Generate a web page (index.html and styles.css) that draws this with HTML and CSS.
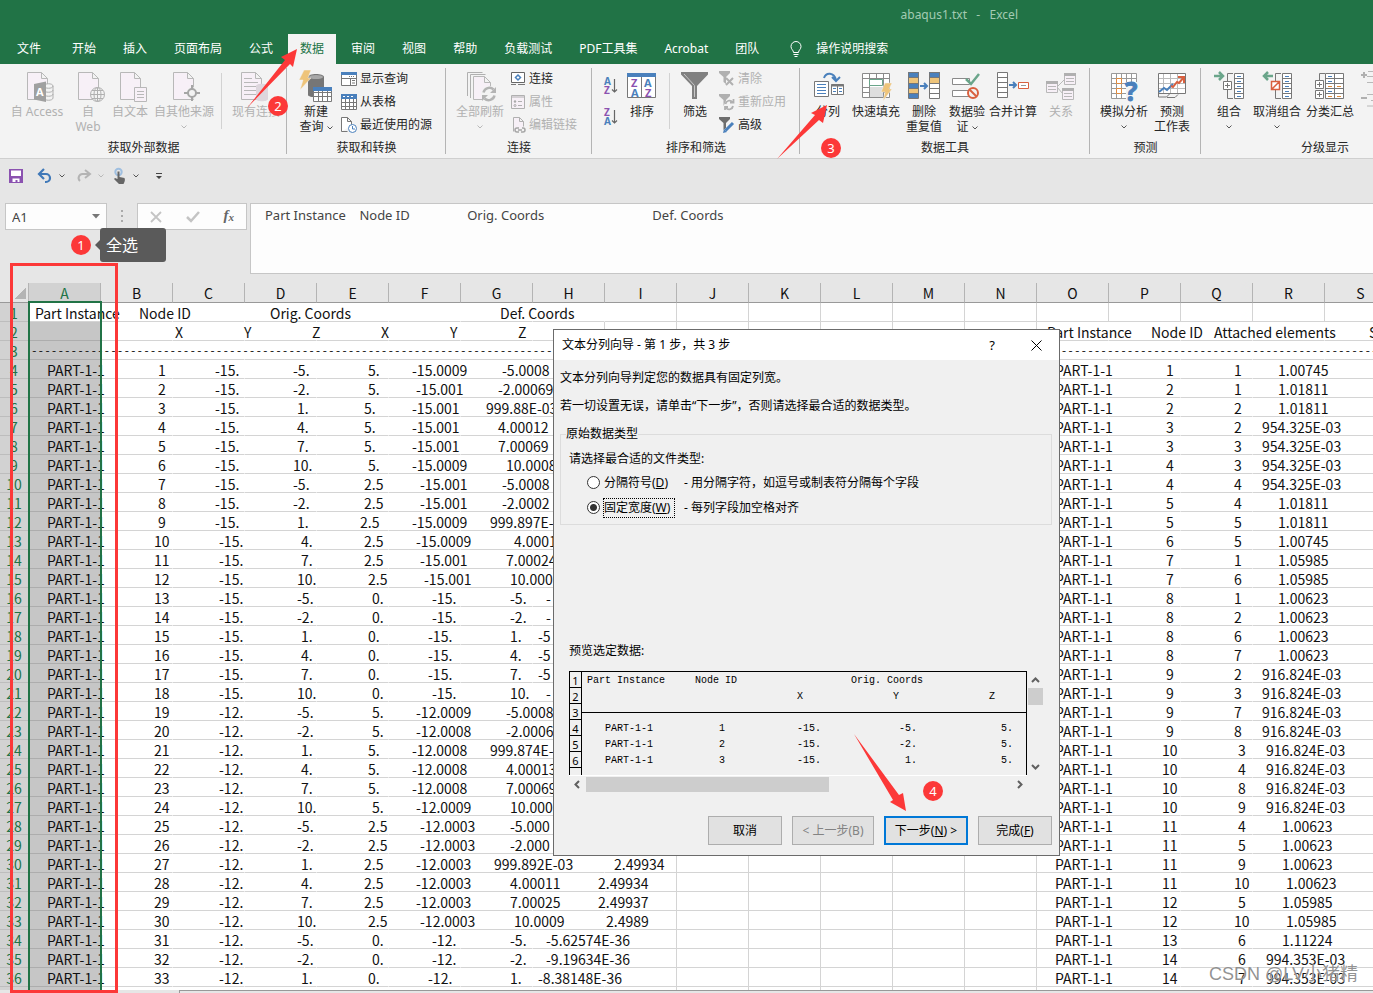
FILE: index.html
```html
<!DOCTYPE html>
<html lang="zh-CN">
<head>
<meta charset="utf-8">
<title>abaqus1.txt - Excel</title>
<link rel="stylesheet" href="styles.css">
</head>
<body>
<div class="app">
<header class="titlebar">
  <div class="doc-title">abaqus1.txt&nbsp;&nbsp; - &nbsp;&nbsp;Excel</div>
  <nav class="tabs">
    <button class="tab tab-file">文件</button>
    <button class="tab">开始</button>
    <button class="tab">插入</button>
    <button class="tab">页面布局</button>
    <button class="tab">公式</button>
    <button class="tab tab-active">数据</button>
    <button class="tab">审阅</button>
    <button class="tab">视图</button>
    <button class="tab">帮助</button>
    <button class="tab">负载测试</button>
    <button class="tab">PDF工具集</button>
    <button class="tab">Acrobat</button>
    <button class="tab">团队</button>
    <button class="tab tell-me"><svg width="12" height="17" viewBox="0 0 12 17" fill="none" stroke="#fff"><path d="M3.500 11.500C3.500 9 1 8.500 1 5.500A5 5 0 0 1 11 5.500C11 8.500 8.500 9 8.500 11.500ZM3.500 13.500h5M4.500 15.500h3"/></svg>操作说明搜索</button>
  </nav>
</header>

<section class="ribbon">
  <div class="group g-external">
    <div class="tools">
      <button class="big" disabled><svg class="icon" viewBox="21 70 32 34"><path class="pg" d="M27.500 72.500h14l6 6V99.500H27.500ZM41.500 72.500v6h6"/><path class="db" d="M44 85v13c0 3 9 3 9 0V86c0-3-9-3-9 0 0 3 9 3 9 0M44 90c0 3 9 3 9 0M44 94c0 3 9 3 9 0"/><path fill="#a0a0a0" d="M34 84 46 81.500V102L34 99.500Z"/><text x="36" y="96" font-size="11" font-weight="700" fill="#fff">A</text></svg><span>自 Access</span></button>
      <button class="big" disabled><svg class="icon" viewBox="72 70 32 34"><path class="pg" d="M78.500 72.500h14l6 6V99.500H78.500ZM92.500 72.500v6h6"/><g fill="#f3f3f3" stroke="#b0b0b0"><circle cx="97.500" cy="94.500" r="7"/><ellipse cx="97.500" cy="94.500" rx="3.500" ry="7"/><path fill="none" d="M90.500 94.500h14M97.500 87.500v14M92 90.500h11M92 98.500h11"/></g></svg><span>自<br>Web</span></button>
      <button class="big" disabled><svg class="icon" viewBox="114 70 32 34"><path class="pg" d="M120.500 72.500h14l6 6V99.500H120.500ZM134.500 72.500v6h6"/><path class="pg" d="M134.500 87.500h12v14h-12ZM137 91.500h7M137 94.500h7M137 97.500h7"/></svg><span>自文本</span></button>
      <button class="big" disabled><svg class="icon" viewBox="168 70 32 34"><path class="pg" d="M173.500 72.500h14l6 6V99.500H173.500ZM187.500 72.500v6h6"/><circle cx="192" cy="93" r="6" fill="#f3f3f3"/><g fill="none" stroke="#a6a6a6" stroke-width="2"><circle cx="192" cy="93" r="4"/><path d="M192 85v4M192 97v4M184 93h4M196 93h4"/></g></svg><span>自其他来源</span><svg class="chev" viewBox="0 0 6 4"><path d="M.5.5 3 3 5.500.5"/></svg></button>
      <i class="rule"></i>
      <button class="big" disabled><svg class="icon" viewBox="240 70 32 34"><path class="pg" d="M241.500 72.500h14l6 6V99.500H241.500ZM255.500 72.500v6h6M244 78.500h8M244 82.500h14M244 86.500h14M244 90.500h14M244 94.500h14"/><path fill="#ddd6dd" d="M256 86c0-3 12-3 12 0v13c0 3-12 3-12 0Z"/></svg><span>现有连接</span></button>
    </div>
    <div class="group-name">获取外部数据</div>
  </div>

  <div class="group g-transform">
    <div class="tools">
      <button class="big"><svg class="icon" viewBox="300 70 32 34"><path fill="#767676" d="M308 77c0-4 16-4 16 0v18c0 3-16 3-16 0Z"/><ellipse cx="316" cy="77" rx="7" ry="2" fill="#a8a8a8"/><path fill="#eec47a" stroke="#f3f3f3" stroke-width=".5" d="M304 70h7l-3 8h3l-11 12 3-10h-4Z"/><path fill="#fff" stroke="#7a7a7a" d="M313.500 87.500h18v14h-18ZM313.500 92.500h18M313.500 96.500h18M318.500 91v10M322.500 91v10M327.500 91v10"/><path fill="#4a80bc" d="M313 87h19v4h-19z"/></svg><span>新建<br>查询 <svg class="chev-in" viewBox="0 0 6 4"><path d="M.5.5 3 3 5.500.5"/></svg></span></button>
      <div class="stack">
        <button class="small"><svg viewBox="0 0 16 16"><path fill="#fff" stroke="#777" d="M.5 1.500h15v13H.5ZM.5 7.500h15M9.500 8v6M11 9.500h3M11 12h3"/><path fill="#4a80bc" d="M0 1h16v3H0z"/><path stroke="#777" stroke-dasharray="1 1" d="M8 5.500h6"/></svg>显示查询</button>
        <button class="small"><svg viewBox="0 0 16 16"><path fill="#fff" stroke="#777" d="M.5.5h15v15H.5ZM.5 8.500h15M.5 12.500h15M4.500 5v10M8.500 5v10M12.500 5v10"/><path fill="#4a80bc" d="M0 0h16v5H0z"/><path stroke="#fff" stroke-dasharray="2 2" d="M2 2.500h12"/></svg>从表格</button>
        <button class="small"><svg viewBox="0 0 16 16"><path fill="#fff" stroke="#777" d="M.5 14.500V.5h6l4 4v4M6.500.5v4h4M.5 14.500h6"/><circle cx="11.500" cy="11.500" r="4" fill="#fff" stroke="#4a80bc"/><path fill="none" stroke="#4a80bc" d="M11.500 9v3h2.500"/></svg>最近使用的源</button>
      </div>
    </div>
    <div class="group-name">获取和转换</div>
  </div>

  <div class="group g-connect">
    <div class="tools">
      <button class="big" disabled><svg class="icon" viewBox="464 70 32 34"><path fill="none" stroke="#b0b0b0" d="M467.500 96V72.500h15M470.500 98V74.500h15"/><path class="pg" d="M473.500 76.500h11l6 6V99.500h-17ZM484.500 76.500v6h6"/><circle cx="489" cy="94" r="8" fill="#f3f3f3"/><g fill="none" stroke="#b4b4b4" stroke-width="2.500"><path d="M483.500 92.500a6 6 0 0 1 10-3M494.500 95.500a6 6 0 0 1-10 3"/></g><path fill="#b4b4b4" d="M496 87v6h-6ZM482 101v-6h6Z"/></svg><span>全部刷新</span><svg class="chev" viewBox="0 0 6 4"><path d="M.5.5 3 3 5.500.5"/></svg></button>
      <div class="stack">
        <button class="small"><svg viewBox="0 0 16 16"><path fill="#fff" stroke="#666" d="M1.500 1.500h13v10h-13Z"/><path stroke="#777" d="M1 13.500h5M8 13.500h7"/><path fill="none" stroke="#4a80bc" stroke-width="1.500" d="M8 4 10.500 6.500 8 9 5.500 6.500Z"/></svg>连接</button>
        <button class="small" disabled><svg viewBox="0 0 16 16"><path fill="#f7f0f7" stroke="#b0b0b0" d="M1.500 1.500h13v13h-13ZM1.500 3h13M8 7.500h4M8 11.500h4"/><circle cx="5" cy="7.500" r="1.200" fill="#aaa"/><circle cx="5" cy="11.500" r="1" fill="none" stroke="#aaa"/></svg>属性</button>
        <button class="small" disabled><svg viewBox="0 0 16 16"><path fill="#f7f0f7" stroke="#b0b0b0" d="M3.500 14.500V.5h6l4 4v5M9.500.5v4h4"/><path fill="none" stroke="#a6a6a6" stroke-width="1.500" d="M9 11H7a2 2 0 0 0 0 4h2M12 11h1a2 2 0 0 1 0 4h-2M8 13h4"/></svg>编辑链接</button>
      </div>
    </div>
    <div class="group-name">连接</div>
  </div>

  <div class="group g-sort">
    <div class="tools">
      <div class="az">
        <button aria-label="升序"><svg width="14" height="18" viewBox="0 0 14 18"><text x="0" y="8" font-size="10" font-weight="700" fill="#4a80bc">A</text><text x="0" y="17" font-size="10" font-weight="700" fill="#8b52b0">Z</text><path fill="none" stroke="#666" stroke-width="1.200" d="M10.500 2v13M8 12.500l2.500 2.500 2.500-2.500"/></svg></button>
        <button aria-label="降序"><svg width="14" height="18" viewBox="0 0 14 18"><text x="0" y="8" font-size="10" font-weight="700" fill="#8b52b0">Z</text><text x="0" y="17" font-size="10" font-weight="700" fill="#4a80bc">A</text><path fill="none" stroke="#666" stroke-width="1.200" d="M10.500 2v13M8 12.500l2.500 2.500 2.500-2.500"/></svg></button>
      </div>
      <button class="big"><svg class="icon" viewBox="627 70 32 34"><path fill="#fff" stroke="#777" d="M628.500 73.500h28v24h-28ZM642.500 77v20"/><path fill="#4a80bc" d="M628 73h29v4h-29z"/><g font-size="11" font-weight="700"><text x="632" y="87" fill="#8b52b0">Z</text><text x="632" y="97" fill="#4a80bc">A</text><text x="645" y="87" fill="#4a80bc">A</text><text x="646" y="97" fill="#8b52b0">Z</text></g></svg><span>排序</span></button>
      <i class="rule"></i>
      <button class="big"><svg class="icon" viewBox="678 70 32 34"><path fill="#808080" d="M680 72h27v2.500L696 86v13h-5V86L680 74.500Z"/><path fill="none" stroke="#c8c8c8" d="M683 74l10.500 11.500V97"/></svg><span>筛选</span></button>
      <div class="stack">
        <button class="small" disabled><svg viewBox="0 0 16 16"><path fill="#b0b0b0" d="M0 0h11v2L7 6v7L4.500 11V6L0 2Z"/><path stroke="#b0b0b0" stroke-width="2" d="M7 7l7 7M14 7l-7 7"/></svg>清除</button>
        <button class="small" disabled><svg viewBox="0 0 16 16"><path fill="#b0b0b0" d="M0 0h11v2L7 6v1l-2.500 5V6L0 2Z"/><path fill="none" stroke="#b0b0b0" stroke-width="1.800" d="M6.500 10a4 4 0 0 1 7-2M14 12a4 4 0 0 1-7 2M14.500 5v3.500H11M6 16v-3h3"/></svg>重新应用</button>
        <button class="small"><svg viewBox="0 0 16 16"><path fill="#6e6e6e" d="M0 0h11v2L7 6v5L4.500 13V6L0 2Z"/><path stroke="#4a80bc" stroke-width="3" d="M6.500 13.500 14 6"/><path fill="#4a80bc" d="M4 16l1-4 3 3Z"/></svg>高级</button>
      </div>
    </div>
    <div class="group-name">排序和筛选</div>
  </div>

  <div class="group g-tools">
    <div class="tools">
      <button class="big"><svg class="icon" viewBox="812 70 32 34"><path fill="#fff" stroke="#777" d="M814.500 81.500h14v15h-14ZM831.500 84.500h12v10h-12ZM837.500 85v9"/><path stroke="#777" stroke-width="2" d="M831 85.500h13"/><path stroke="#4a80bc" d="M817 84.500h9M817 87.500h9M817 90.500h9M817 93.500h9M833 88.500h3M839 88.500h3M833 91.500h3M839 91.500h3"/><path fill="none" stroke="#4a80bc" stroke-width="2" d="M824 78c2-6 10-6 12 2M832 77l4 4 4-4"/></svg><span>分列</span></button>
      <button class="big"><svg class="icon" viewBox="860 70 32 34"><path fill="#fff" stroke="#8a8a8a" d="M862.500 73.500h27v24h-27ZM862.500 78.500h27M862.500 87.500h27M862.500 92.500h27M869.500 74v23M883.500 74v23M876.500 74v4"/><path fill="#dedede" d="M870 87h13v10h-13z"/><path fill="#fff" stroke="#6aa58a" d="M869.500 79.500h13v6h-13Z"/><path fill="#eec47a" stroke="#f3f3f3" stroke-width=".5" d="M885 83h7l-3 6h3l-9 12 2-9h-4Z"/></svg><span>快速填充</span></button>
      <button class="big"><svg class="icon" viewBox="908 70 32 34"><path fill="#4a80bc" d="M908 72h11v26h-11zM929 72h11v5h-11z"/><path fill="#eec47a" d="M908 78h11v5h-11zM908 88h11v5h-11zM929 78h11v5h-11z"/><path fill="#fff" d="M929 83h11v15h-11z"/><path fill="none" stroke="#777" d="M908.500 72.500h10v26h-10ZM908.500 77.500h10M908.500 83.500h10M908.500 88.500h10M908.500 93.500h10M929.500 72.500h10v26h-10ZM929.500 77.500h10M929.500 83.500h10M929.500 88.500h10M929.500 93.500h10"/><path fill="none" stroke="#4a80bc" stroke-width="2" d="M920 86h7M924 83l3 3-3 3"/></svg><span>删除<br>重复值</span></button>
      <button class="big"><svg class="icon" viewBox="951 70 32 34"><path fill="#fff" stroke="#8a8a8a" d="M952.500 78.500h17v6h-17ZM952.500 90.500h17v6h-17Z"/><path fill="none" stroke="#6aa58a" stroke-width="2.500" d="M966 79l5 5 8-10"/><circle cx="973" cy="93" r="5" fill="#f3f3f3" stroke="#d9603f" stroke-width="2"/><path stroke="#d9603f" stroke-width="2" d="M969.500 89.500l7 7"/></svg><span>数据验<br>证 <svg class="chev-in" viewBox="0 0 6 4"><path d="M.5.5 3 3 5.500.5"/></svg></span></button>
      <button class="big"><svg class="icon" viewBox="997 70 32 34"><path fill="#fff" stroke="#777" d="M997.500 72.500h10v25h-10ZM997.500 77.500h10M997.500 82.500h10M997.500 87.500h10M997.500 92.500h10"/><path fill="none" stroke="#4a80bc" stroke-width="2" d="M1009 85h7M1013 82l3 3-3 3"/><path fill="#fff" stroke="#d9603f" d="M1018.500 82.500h10v6h-10Z"/><path stroke="#999" d="M1021 85.500h5"/></svg><span>合并计算</span></button>
      <button class="big" disabled><svg class="icon" viewBox="1045 70 32 34"><path fill="none" stroke="#b8b8b8" d="M1057 87l7-7M1057 87l6 7"/><path class="pg" d="M1046.500 81.500h11v11h-11ZM1064.500 73.500h11v11h-11ZM1062.500 88.500h11v11h-11ZM1048 86.500h8M1048 89.500h8M1066 78.500h8M1066 81.500h8M1064 93.500h8M1064 96.500h8"/><path fill="#b0b0b0" d="M1046 81h12v3h-12zM1064 73h12v3h-12zM1062 88h12v3h-12z"/></svg><span>关系</span></button>
    </div>
    <div class="group-name">数据工具</div>
  </div>

  <div class="group g-forecast">
    <div class="tools">
      <button class="big"><svg class="icon" viewBox="1108 70 32 34"><path fill="#fff" stroke="#999" d="M1111.500 73.500h25v25h-25ZM1111.500 78.500h25M1111.500 83.500h25M1111.500 88.500h25M1111.500 93.500h25M1116.500 74v24M1121.500 74v24M1126.500 74v24M1131.500 74v24"/><path fill="#fff" stroke="#e08a3c" d="M1116.500 78.500h5v5h-5ZM1116.500 88.500h5v5h-5Z"/><path fill="#f3f3f3" d="M1126 82h12v20h-12z"/><text x="1125" y="101" font-size="26" font-weight="700" fill="#4a80bc" stroke="#4a80bc" stroke-width="1">?</text></svg><span>模拟分析</span><svg class="chev" viewBox="0 0 6 4"><path d="M.5.5 3 3 5.500.5"/></svg></button>
      <button class="big"><svg class="icon" viewBox="1156 70 32 34"><path fill="#fff" stroke="#777" d="M1158.500 73.500h27v20h-27Z"/><path fill="none" stroke="#bbb" d="M1159 78.500h26M1159 83.500h26M1159 88.500h26M1163.500 74v19M1170.500 74v19M1177.500 74v19"/><path fill="none" stroke="#777" d="M1158.500 93v4h8l3-3M1167 97.500h8l3-3"/><path fill="none" stroke="#4a80bc" stroke-width="2" d="M1159 92l5-4 3 2 6-6"/><path fill="none" stroke="#d9603f" stroke-width="2" d="M1171 86l2 1 4-5 2 1 5-6M1178 77h6v6"/></svg><span>预测<br>工作表</span></button>
    </div>
    <div class="group-name">预测</div>
  </div>

  <div class="group g-outline">
    <div class="tools">
      <button class="big"><svg class="icon" viewBox="1213 70 32 34"><path fill="none" stroke="#6aa58a" stroke-width="2.500" d="M1214 76h9M1219 72l4 4-4 4"/><path fill="#fff" stroke="#777" d="M1223.500 81.500h8v8h-8ZM1234.500 73.500h9v25h-9ZM1234.500 78.500h9M1234.500 83.500h9M1234.500 88.500h9M1234.500 93.500h9M1225 85.500h5M1227.500 83v5"/><path fill="none" stroke="#777" d="M1233 73.500h-5.500v8M1227.500 90v8.500h5.500"/><path stroke="#4a80bc" d="M1237 76.500h4M1237 81.500h4M1237 86.500h4M1237 91.500h4M1237 96.500h4"/></svg><span>组合</span><svg class="chev" viewBox="0 0 6 4"><path d="M.5.5 3 3 5.500.5"/></svg></button>
      <button class="big"><svg class="icon" viewBox="1261 70 32 34"><path fill="none" stroke="#6aa58a" stroke-width="2.500" d="M1273 76h-9M1268 72l-4 4 4 4"/><path fill="#fff" stroke="#777" d="M1282.500 73.500h9v25h-9ZM1282.500 78.500h9M1282.500 83.500h9M1282.500 88.500h9M1282.500 93.500h9"/><path fill="none" stroke="#777" d="M1281 73.500h-5.500v8M1275.500 90v8.500h5.500"/><path fill="#fff" stroke="#d9603f" stroke-width="1.500" d="M1271.500 81.500h8v8h-8ZM1272 89l7-7"/><path stroke="#4a80bc" d="M1285 76.500h4M1285 81.500h4M1285 86.500h4M1285 91.500h4M1285 96.500h4"/></svg><span>取消组合</span><svg class="chev" viewBox="0 0 6 4"><path d="M.5.5 3 3 5.500.5"/></svg></button>
      <button class="big"><svg class="icon" viewBox="1314 70 32 34"><path fill="none" stroke="#777" d="M1325 73.500h-5.500v7"/><path fill="#fff" stroke="#777" d="M1315.500 80.500h8v8h-8ZM1315.500 90.500h8v8h-8ZM1317 84.500h5M1319.500 82v5M1317 94.500h5M1319.500 92v5M1325.500 73.500h18v25h-18ZM1325.500 78.500h18M1325.500 83.500h18M1325.500 88.500h18M1325.500 93.500h18M1334.500 74v24"/><path stroke="#4a80bc" d="M1328 76.500h4M1328 81.500h4M1328 91.500h4"/><path stroke="#e08a3c" d="M1328 86.500h4M1337 86.500h4M1328 96.500h4M1337 96.500h4"/></svg><span>分类汇总</span></button>
      <button class="big" disabled aria-label="显示明细数据"><svg class="icon" viewBox="1360 70 32 34"><path fill="none" stroke="#b0b0b0" stroke-width="2" d="M1361 75h6M1364 72v6M1361 98h6"/><path class="pg" d="M1377 71.500h-9M1367 76.500h10M1377 82.500h-10M1377 94.500h-10M1371 100.500h10M1377 106h-10"/></svg></button>
    </div>
    <div class="group-name">分级显示</div>
  </div>
</section>

<section class="qat">
  <button aria-label="保存"><svg width="14" height="14" viewBox="0 0 14 14"><path fill="#8b52b0" d="M0 0h14v14H0z"/><path fill="#fff" d="M2 1.500h10V7H2zM3.500 9.500h7V13h-2v-2h-2v2h-3z"/></svg></button>
  <button aria-label="撤消"><svg width="16" height="14" viewBox="0 0 16 14" fill="none" stroke="#3f78b8" stroke-width="2.200"><path d="M7 0 2 5l5 5M2 5h7a4 4 0 0 1 0 8H8"/></svg></button>
  <button aria-label="撤消选项"><svg class="chev-q" viewBox="0 0 6 4"><path d="M.5.5 3 3 5.500.5"/></svg></button>
  <button class="q-redo" aria-label="恢复" disabled><svg width="16" height="14" viewBox="0 0 16 14" fill="none" stroke="#b4b4b4" stroke-width="2"><path d="M9 1l5 4-5 4M14 5H7a4 4 0 0 0-3 7"/></svg></button>
  <button aria-label="恢复选项" disabled><svg class="chev-q" viewBox="0 0 6 4"><path d="M.5.5 3 3 5.500.5"/></svg></button>
  <button class="q-touch" aria-label="触摸模式"><svg width="14" height="16" viewBox="0 0 14 16"><circle cx="5.500" cy="4" r="3.200" fill="none" stroke="#9fbfe0" stroke-width="2"/><path fill="#666" d="M4.500 3.500h2V9l5 1c1 2 0 4-1 6H6L1 11l1-1 2.500 1z"/></svg></button>
  <button aria-label="触摸选项"><svg class="chev-q" viewBox="0 0 6 4"><path d="M.5.5 3 3 5.500.5"/></svg></button>
  <button class="q-more" aria-label="自定义快速访问工具栏"><svg width="6" height="6" viewBox="0 0 6 6"><path fill="#444" d="M0 0h6v1H0zM0 3h6L3 6z"/></svg></button>
</section>

<section class="formula-bar">
  <div class="name-box"><input aria-label="名称框" value="A1"><svg width="8" height="5" viewBox="0 0 8 5"><path fill="#777" d="M0 0h8L4 4.500z"/></svg></div>
  <svg class="grip" width="2" height="12" viewBox="0 0 2 12"><path fill="#aaa" d="M0 0h2v2H0zM0 5h2v2H0zM0 10h2v2H0z"/></svg>
  <div class="fx">
    <button aria-label="取消"><svg width="12" height="12" viewBox="0 0 12 12"><path stroke="#c4c4c4" stroke-width="1.800" d="M1 1l10 10M11 1 1 11"/></svg></button>
    <button aria-label="输入"><svg width="14" height="12" viewBox="0 0 14 12"><path fill="none" stroke="#c4c4c4" stroke-width="2.500" d="M1 6l4 4 8-9"/></svg></button>
    <button class="fx-btn" aria-label="插入函数">f<sub>x</sub></button>
  </div>
  <textarea class="formula" aria-label="编辑栏" spellcheck="false">Part Instance    Node ID                 Orig. Coords                                Def. Coords</textarea>
</section>

<main class="sheet">
  <table class="grid">
    <colgroup id="cols"></colgroup>
    <thead id="head"></thead>
    <tbody id="rows"></tbody>
  </table>
  <div class="selection"></div>

  <form class="dialog" aria-labelledby="dlg-title" onsubmit="return false">
    <div class="dlg-title"><span id="dlg-title">文本分列向导 - 第 1 步，共 3 步</span>
      <button type="button" class="dlg-help" aria-label="帮助">?</button>
      <button type="button" aria-label="关闭"><svg width="11" height="11" viewBox="0 0 11 11"><path stroke="#000" d="M.5.5l10 10M10.500.5l-10 10"/></svg></button>
    </div>
    <p class="dlg-p">文本分列向导判定您的数据具有固定列宽。</p>
    <p class="dlg-p">若一切设置无误，请单击“下一步”，否则请选择最合适的数据类型。</p>
    <fieldset class="types">
      <legend>原始数据类型</legend>
      <p>请选择最合适的文件类型:</p>
      <div class="choice"><input type="radio" name="t" id="t1"><label for="t1">分隔符号(<u>D</u>)</label><span>- 用分隔字符，如逗号或制表符分隔每个字段</span></div>
      <div class="choice"><input type="radio" name="t" id="t2" checked><label for="t2" class="focus">固定宽度(<u>W</u>)</label><span>- 每列字段加空格对齐</span></div>
    </fieldset>
    <div class="preview-name">预览选定数据:</div>
    <div class="preview">
      <div class="preview-box">
        <table>
          <tr><th>1</th><td>Part Instance     Node ID                   Orig. Coords</td></tr>
          <tr><th>2</th><td>                                   X               Y               Z</td></tr>
          <tr class="dash-row"><th>3</th><td></td></tr>
          <tr><th>4</th><td>   PART-1-1           1            -15.             -5.              5.</td></tr>
          <tr><th>5</th><td>   PART-1-1           2            -15.             -2.              5.</td></tr>
          <tr><th>6</th><td>   PART-1-1           3            -15.              1.              5.</td></tr>
          <tr><th></th><td></td></tr>
        </table>
      </div>
      <div class="vbar"><svg width="9" height="6" viewBox="0 0 9 6"><path d="M1 5l3.500-3.500L8 5"/></svg><i></i><svg width="9" height="6" viewBox="0 0 9 6"><path d="M1 1l3.500 3.500L8 1"/></svg></div>
      <div class="hbar"><svg width="6" height="9" viewBox="0 0 6 9"><path d="M5 1 1.500 4.500 5 8"/></svg><i></i><svg width="6" height="9" viewBox="0 0 6 9"><path d="M1 1l3.500 3.500L1 8"/></svg></div>
    </div>
    <div class="actions">
      <button type="button">取消</button>
      <button type="button" class="mid" disabled>&lt; 上一步(B)</button>
      <button type="button" class="mid primary">下一步(<u>N</u>) &gt;</button>
      <button type="button">完成(<u>F</u>)</button>
    </div>
  </form>
</main>
<footer class="bottom"><div></div></footer>

<div class="tip">全选</div>
<div class="frame"></div>
<svg class="arrow arrow2" viewBox="247 49 50 60"><path d="M247 108 285 60 281 57 297 49 293 67 290 64Z"/></svg>
<svg class="arrow arrow3" viewBox="777 105 50 54"><path d="M777 159 815 115 811 113 827 105 823 123 819 120Z"/></svg>
<svg class="arrow arrow4" viewBox="854 734 52 78"><path d="M854 734 893 800 890 802 906 811 903 793 899 795Z"/></svg>
<b class="badge badge1">1</b>
<b class="badge badge2">2</b>
<b class="badge badge3">3</b>
<b class="badge badge4">4</b>
<div class="watermark">CSDN @LV小猪精</div>
</div>
<script src="grid.js"></script>
</body>
</html>
```
FILE: styles.css
```css
* { box-sizing: border-box; }
html, body { height: 100%; margin: 0; }
body {
  font: 12px/15px "Noto Sans", "Noto Sans CJK SC", sans-serif;
  color: #262626;
  overflow: hidden;
}
button {
  font: inherit; color: inherit; background: none; border: 0; padding: 0; margin: 0;
  white-space: nowrap;
}
p { margin: 0; }
svg { overflow: visible; display: block; flex: none; }
svg text { font-family: "Open Sans", sans-serif; }

.app {
  position: relative; height: 100vh; overflow: hidden;
  display: flex; flex-direction: column; background: #e6e6e6;
}

/* title and tabs */
.titlebar { background: #217346; color: #fff; flex: none; }
.doc-title { height: 34px; line-height: 30px; padding-right: 355px; text-align: right; color: #a3cbb3; }
.tabs { display: flex; gap: 3px; height: 30px; padding-left: 5px; }
.tab { padding: 0 12px; line-height: 28px; }
.tab-file { margin-right: 4px; }
.tab-active { background: #f3f3f3; color: #217346; }
.tell-me { display: flex; align-items: center; gap: 14px; padding-left: 16px; }

/* ribbon */
.ribbon {
  display: flex; flex: none; background: #f3f3f3; overflow: hidden;
  border-bottom: 1px solid #cfcfcf;
}
.group {
  flex: none; position: relative; padding-top: 3px; height: 94px;
  background: linear-gradient(#b4b4b4, #b4b4b4) right 4px / 1px 86px no-repeat;
}
.group:last-child { background: none; }
.tools { display: grid; height: 73px; align-items: start; }
.group-name { text-align: center; line-height: 16px; }
.g-external { width: 287px; }
.g-external .tools { grid-template-columns: 60px 42px 42px 66px 8px 54px; padding-left: 7px; }
.g-transform { width: 159px; }
.g-transform .tools { grid-template-columns: 50px 1fr; padding-left: 4px; }
.g-connect { width: 146px; }
.g-connect .tools { grid-template-columns: 50px 1fr; padding-left: 9px; column-gap: 5px; }
.g-sort { width: 208px; }
.g-sort .tools { grid-template-columns: 15px 46px 8px 44px 1fr; padding-left: 12px; }
.g-sort .stack { padding-left: 2px; }
.g-tools { width: 290px; }
.g-tools .tools { grid-template-columns: 48px 48px 48px 38px 54px 42px; padding-left: 4px; }
.g-forecast { width: 111px; }
.g-forecast .tools { grid-template-columns: 52px 44px; padding-left: 8px; }
.g-outline { width: 248px; }
.g-outline .tools { grid-template-columns: 48px 48px 58px 34px; padding-left: 4px; }
.big { display: flex; flex-direction: column; align-items: center; padding-top: 3px; line-height: 15px; }
.g-external .big:last-child { overflow: visible; margin-left: 4px; margin-right: -4px; }
.icon { width: 32px; height: 34px; }
.big:disabled, .small:disabled { color: #b1b1b1; }
.chev { width: 6px; height: 4px; margin-top: 6px; }
.chev-in { width: 6px; height: 4px; display: inline-block; vertical-align: middle; }
.chev-q { width: 6px; height: 4px; }
.chev path, .chev-in path, .chev-q path { fill: none; stroke: #555; }
:disabled .chev path, :disabled .chev-q path { stroke: #b8b8b8; }
.pg { fill: #f7f0f7; stroke: #b8b8b8; }
.db { fill: #f3f3f3; stroke: #b0b0b0; }
.rule { justify-self: center; width: 1px; height: 56px; margin-top: 6px; background: #d2d2d2; }
.stack { display: grid; grid-auto-rows: 23px; }
.small { display: flex; align-items: center; gap: 3px; text-align: left; }
.small svg { width: 16px; height: 16px; }
.az { display: grid; gap: 13px; padding-top: 10px; }

/* quick access */
.qat { display: flex; flex: none; align-items: center; height: 44px; padding: 0 0 10px 9px; }
.qat button + button { margin-left: 14px; }
.qat button:nth-child(3), .qat button:nth-child(5), .qat button:nth-child(7) { margin-left: 6px; }
.qat .q-redo { margin-left: 11px; }
.qat .q-touch { margin-left: 9px; }
.qat .q-more { margin-left: 17px; }

/* formula bar */
.formula-bar { display: flex; flex: none; height: 80px; align-items: flex-start; padding-left: 5px; }
.name-box, .fx { display: flex; align-items: center; height: 27px; background: #fdfdfd; border: 1px solid #c6c6c6; }
.name-box { width: 102px; padding: 0 6px; }
.name-box input { flex: 1; min-width: 0; border: 0; padding: 0; background: none; font: 13px "Noto Sans", sans-serif; color: #444; }
.grip { margin: 7px 14px 0; }
.fx { width: 110px; justify-content: space-between; padding: 0 12px; }
.fx-btn { font: italic 700 15px/15px "Liberation Serif", serif; color: #666; }
.fx-btn sub { font-size: 11px; vertical-align: -1px; }
.formula {
  flex: 1; height: 71px; margin-left: 3px; padding: 2px 14px; resize: none; overflow: hidden;
  border: 1px solid #c6c6c6; border-right: 0; background: #fdfdfd;
  font: 13px/19px "Noto Sans", sans-serif; color: #444; white-space: pre;
}

/* sheet */
.sheet { position: relative; flex: 1; min-height: 0; overflow: hidden; background: #fff; font-family: "Noto Sans CJK SC", sans-serif; }
.grid { table-layout: fixed; width: 1397px; border-collapse: separate; border-spacing: 0; font-size: 14px; line-height: 18px; color: #111; }
.grid col { width: 72px; }
.grid col:first-child { width: 29px; }
.grid th { font-weight: 400; padding: 0; text-align: center; background: #e6e6e6; }
.grid thead th { height: 20px; padding-top: 2px; line-height: 17px; border-right: 1px solid #b4b4b4; border-bottom: 1px solid #999; }
.grid thead th:first-child { background: #e6e6e6 linear-gradient(135deg, transparent 50%, #b4b4b4 50%) 15px 5px / 11px 11px no-repeat; }
.grid thead th.on, .grid tbody th { background-color: #d2d2d2; color: #217346; }
.grid td, .grid tbody th { height: 19px; padding: 2px 0 0; line-height: 16px; border-bottom: 1px solid #d4d4d4; border-right: 1px solid #d4d4d4; white-space: nowrap; }
.grid tbody th { border-color: #bdbdbd; }
.grid td.spill { border-right-color: transparent; }
.grid td.sel { background: #c6c6c6; border-bottom-color: #adadad; }
.record, .record-r { display: grid; height: 16px; white-space: pre; }
.record { width: 640px; padding-left: 18px; grid-template-columns: 107px 61px 78px 67px 52px 74px 52px 1fr; }
.record-r { width: 340px; padding-left: 18px; grid-template-columns: 107px 72px 28px 1fr; }
.record span, .record-r span { padding-left: calc(var(--s) * 4px); }
.record.titles { padding-left: 6px; grid-template-columns: 104px 131px 230px 1fr; }
.record.axes { padding-left: 146px; grid-template-columns: 69px 68px 69px 69px 68px 1fr; }
.record-r.titles-r { padding-left: 10px; grid-template-columns: 104px 63px 155px 1fr; }
.dashes { width: 1360px; height: 16px; overflow: hidden; padding-left: 2px; font: 11px/17px "Liberation Mono", monospace; }
.selection { position: absolute; left: 28px; top: 18px; bottom: 0; width: 74px; border: 2px solid #217346; border-bottom: 0; }
.bottom { flex: none; height: 3px; padding-left: 179px; }
.bottom div { height: 3px; border: 1px solid #999; border-width: 1px 0 0 1px; }

/* wizard */
.dialog {
  position: absolute; left: 553px; top: 46px; width: 507px; padding-bottom: 10px;
  background: #f0f0f0; border: 1px solid #6b6b6b; color: #000;
  font: 12px/16px "Noto Sans", "Noto Sans CJK SC", sans-serif;
}
.dlg-title { display: flex; align-items: center; height: 30px; padding: 0 17px 0 8px; background: #fff; margin-bottom: 10px; }
.dlg-title span { flex: 1; }
.dlg-help { margin-right: 36px; font-size: 13px; }
.dlg-p { padding: 0 6px; margin-bottom: 12px; }
.types { margin: 0 7px 0 6px; padding: 9px 8px 4px; border: 1px solid #dcdcdc; }
.types legend { margin-left: -3px; padding: 0; }
.types p { margin-bottom: 3px; }
.choice { display: flex; align-items: center; height: 25px; padding-left: 18px; }
.choice input { appearance: none; width: 13px; height: 13px; margin: 0 3px 0 0; border: 1px solid #333; border-radius: 50%; background: #fff; }
.choice input:checked { background: radial-gradient(circle, #333 0 3px, #fff 4px); }
.choice label { width: 72px; height: 20px; line-height: 18px; border: 1px dotted transparent; }
.choice .focus { border-color: #000; }
.choice span { margin-left: 9px; }
.preview-name { padding-left: 15px; margin-top: 118px; }
.preview { display: grid; grid-template-columns: 458px 17px; margin: 12px 0 0 15px; }
.preview-box { height: 104px; overflow: hidden; border: 1px solid #000; border-bottom: 0; }
.preview table { width: 100%; border-collapse: separate; border-spacing: 0; }
.preview th { width: 12px; height: 16px; padding: 3px 0 0; font: 11px/12px "Noto Sans", sans-serif; border: 1px solid #000; border-width: 0 1px 1px 0; }
.preview td { height: 16px; padding: 2px 0 0 5px; white-space: pre; font: 10px/14px "Liberation Mono", monospace; }
.dash-row td { background: linear-gradient(#000, #000) 0 8px / 100% 1px no-repeat; }
.vbar, .hbar { display: flex; align-items: center; justify-content: space-between; }
.vbar { flex-direction: column; padding: 6px 0 5px; }
.vbar i { width: 15px; height: 17px; margin: 5px 0 auto; background: #cdcdcd; }
.hbar { height: 17px; padding: 0 4px 0 5px; border-top: 1px solid #fff; }
.hbar i { width: 243px; height: 15px; margin: 0 auto 0 6px; background: #cdcdcd; }
.vbar path, .hbar path { fill: none; stroke: #606060; stroke-width: 2; }
.actions { display: flex; justify-content: flex-end; gap: 10px; margin: 24px 7px 0 0; }
.actions button { width: 74px; height: 29px; border: 1px solid #adadad; background: #e1e1e1; }
.actions .mid { width: 82px; }
.actions :disabled { color: #838383; }
.actions .primary { width: 84px; border: 2px solid #0078d7; }

/* callouts over the window */
.tip {
  position: absolute; left: 100px; top: 228px; width: 66px; height: 34px; padding-left: 6px;
  border-radius: 3px; background: #5a5a5a; color: #fff; font-size: 16px; line-height: 34px;
}
.tip::before { content: ""; position: absolute; left: -5px; top: 12px; border: 5px solid transparent; border-left: 0; border-right-color: #5a5a5a; }
.frame { position: absolute; left: 10px; top: 263px; bottom: 0; width: 108px; border: 3px solid #fc3838; }
.arrow { position: absolute; fill: #fc3838; }
.arrow2 { left: 247px; top: 49px; width: 50px; height: 60px; }
.arrow3 { left: 777px; top: 105px; width: 50px; height: 54px; }
.arrow4 { left: 854px; top: 734px; width: 52px; height: 78px; }
.badge {
  position: absolute; width: 20px; height: 20px; border-radius: 50%; background: #fc3838;
  color: #fff; font-weight: 400; font-size: 13px; line-height: 20px; text-align: center;
}
.badge1 { left: 71px; top: 235px; }
.badge2 { left: 268px; top: 96px; }
.badge3 { left: 821px; top: 138px; }
.badge4 { left: 923px; top: 781px; }
.watermark {
  position: absolute; right: 15px; bottom: 6px; font: 18px/26px "Liberation Sans", "Noto Sans CJK SC", sans-serif;
  color: rgba(110, 110, 110, .75); text-shadow: 0 0 1px #fff;
}
```
FILE: grid.js
```js
// Each value is "steps:text": how many 4px steps the text sits to the right of its field.
const left = [
  ['1:1', '0:-15.', '0:-5.', '2:5.', '0:-15.0009', '4:-5.0008'],
  ['1:2', '0:-15.', '0:-2.', '2:5.', '1:-15.001', '3:-2.00069'],
  ['1:3', '0:-15.', '1:1.', '1:5.', '0:-15.001', '0:999.88E-03'],
  ['1:4', '0:-15.', '1:4.', '1:5.', '0:-15.001', '3:4.00012'],
  ['1:5', '0:-15.', '1:7.', '1:5.', '0:-15.001', '3:7.00069'],
  ['1:6', '0:-15.', '0:10.', '2:5.', '0:-15.0009', '5:10.0008'],
  ['1:7', '0:-15.', '0:-5.', '1:2.5', '2:-15.001', '4:-5.0008'],
  ['1:8', '0:-15.', '0:-2.', '1:2.5', '2:-15.001', '4:-2.0002'],
  ['1:9', '0:-15.', '1:1.', '0:2.5', '0:-15.0009', '1:999.897E-03'],
  ['0:10', '1:-15.', '2:4.', '1:2.5', '1:-15.0009', '7:4.0001'],
  ['0:11', '1:-15.', '2:7.', '1:2.5', '2:-15.001', '5:7.00024'],
  ['0:12', '1:-15.', '1:10.', '2:2.5', '3:-15.001', '6:10.000'],
  ['0:13', '1:-15.', '1:-5.', '3:0.', '5:-15.', '6:-5.', '2:-'],
  ['0:14', '1:-15.', '1:-2.', '3:0.', '5:-15.', '6:-2.', '2:-'],
  ['0:15', '1:-15.', '2:1.', '2:0.', '4:-15.', '6:1.', '0:-5'],
  ['0:16', '1:-15.', '2:4.', '2:0.', '4:-15.', '6:4.', '0:-5'],
  ['0:17', '1:-15.', '2:7.', '2:0.', '4:-15.', '6:7.', '0:-5'],
  ['0:18', '1:-15.', '1:10.', '3:0.', '5:-15.', '6:10.', '2:-'],
  ['0:19', '1:-12.', '1:-5.', '3:5.', '1:-12.0009', '5:-5.0008'],
  ['0:20', '1:-12.', '1:-2.', '3:5.', '1:-12.0008', '5:-2.0006'],
  ['0:21', '1:-12.', '2:1.', '2:5.', '0:-12.0008', '1:999.874E-03'],
  ['0:22', '1:-12.', '2:4.', '2:5.', '0:-12.0008', '5:4.00013'],
  ['0:23', '1:-12.', '2:7.', '2:5.', '0:-12.0008', '5:7.00069'],
  ['0:24', '1:-12.', '1:10.', '3:5.', '1:-12.0009', '6:10.000'],
  ['0:25', '1:-12.', '1:-5.', '2:2.5', '2:-12.0003', '6:-5.000'],
  ['0:26', '1:-12.', '1:-2.', '2:2.5', '2:-12.0003', '6:-2.000'],
  ['0:27', '1:-12.', '2:1.', '1:2.5', '1:-12.0003', '2:999.892E-03', '19:2.49934'],
  ['0:28', '1:-12.', '2:4.', '1:2.5', '1:-12.0003', '6:4.00011', '15:2.49934'],
  ['0:29', '1:-12.', '2:7.', '1:2.5', '1:-12.0003', '6:7.00025', '15:2.49937'],
  ['0:30', '1:-12.', '1:10.', '2:2.5', '2:-12.0003', '7:10.0009', '17:2.4989'],
  ['0:31', '1:-12.', '1:-5.', '3:0.', '5:-12.', '6:-5.', '2:-5.62574E-36'],
  ['0:32', '1:-12.', '1:-2.', '3:0.', '5:-12.', '6:-2.', '2:-9.19634E-36'],
  ['0:33', '1:-12.', '2:1.', '2:0.', '4:-12.', '6:1.', '0:-8.38148E-36']
];

// node, attached element, value
const right = [
  [1, 1, '1.00745'], [2, 1, '1.01811'], [2, 2, '1.01811'], [3, 2, '954.325E-03'],
  [3, 3, '954.325E-03'], [4, 3, '954.325E-03'], [4, 4, '954.325E-03'], [5, 4, '1.01811'],
  [5, 5, '1.01811'], [6, 5, '1.00745'], [7, 1, '1.05985'], [7, 6, '1.05985'],
  [8, 1, '1.00623'], [8, 2, '1.00623'], [8, 6, '1.00623'], [8, 7, '1.00623'],
  [9, 2, '916.824E-03'], [9, 3, '916.824E-03'], [9, 7, '916.824E-03'], [9, 8, '916.824E-03'],
  [10, 3, '916.824E-03'], [10, 4, '916.824E-03'], [10, 8, '916.824E-03'], [10, 9, '916.824E-03'],
  [11, 4, '1.00623'], [11, 5, '1.00623'], [11, 9, '1.00623'], [11, 10, '1.00623'],
  [12, 5, '1.05985'], [12, 10, '1.05985'], [13, 6, '1.11224'], [14, 6, '994.353E-03'],
  [14, 7, '994.353E-03']
];

const letters = 'ABCDEFGHIJKLMNOPQRS'.split('');
const field = v => {
  const i = v.indexOf(':');
  return `<span style="--s:${v.slice(0, i)}">${v.slice(i + 1)}</span>`;
};
const plain = list => list.map(t => `<span style="--s:0">${t}</span>`).join('');

function leftCell(n) {
  if (n === 1) return `<div class="record titles">${plain(['Part Instance', 'Node ID', 'Orig. Coords', 'Def. Coords'])}</div>`;
  if (n === 2) return `<div class="record axes">${plain(['X', 'Y', 'Z', 'X', 'Y', 'Z'])}</div>`;
  if (n === 3) return `<div class="dashes">${'-'.repeat(220)}</div>`;
  const r = left[n - 4];
  return r ? `<div class="record">${['0:PART-1-1', ...r].map(field).join('')}</div>` : '';
}

function rightCell(n) {
  if (n === 2) return `<div class="record-r titles-r">${plain(['Part Instance', 'Node ID', 'Attached elements', 'S'])}</div>`;
  const r = right[n - 4];
  if (!r) return '';
  const [node, el, value] = r;
  const two = node > 9 ? 1 : 0;
  const shift = two + (el > 9 ? 1 : 0) + (value.includes('E') ? 0 : 4);
  return `<div class="record-r">${[`0:PART-1-1`, `${1 - two}:${node}`, `${el > 9 ? 0 : two}:${el}`, `${shift}:${value}`].map(field).join('')}</div>`;
}

document.getElementById('cols').innerHTML = '<col>'.repeat(letters.length + 1);
document.getElementById('head').innerHTML =
  '<tr><th></th>' + letters.map((l, i) => `<th${i ? '' : ' class="on"'}>${l}</th>`).join('') + '</tr>';

let html = '';
for (let n = 1; n <= 37; n++) {
  html += `<tr><th>${n < 37 ? n : ''}</th>`;
  letters.forEach((l, i) => {
    const cls = [];
    const spillLeft = i < (n === 2 ? 7 : 8) || n === 3;
    if (spillLeft || (i >= 14 && n > 1)) cls.push('spill');
    if (i === 0 && n > 1) cls.push('sel');
    const text = i === 0 ? leftCell(n) : i === 14 ? rightCell(n) : '';
    html += `<td class="${cls.join(' ')}">${text}</td>`;
  });
  html += '</tr>';
}
document.getElementById('rows').innerHTML = html;
```
